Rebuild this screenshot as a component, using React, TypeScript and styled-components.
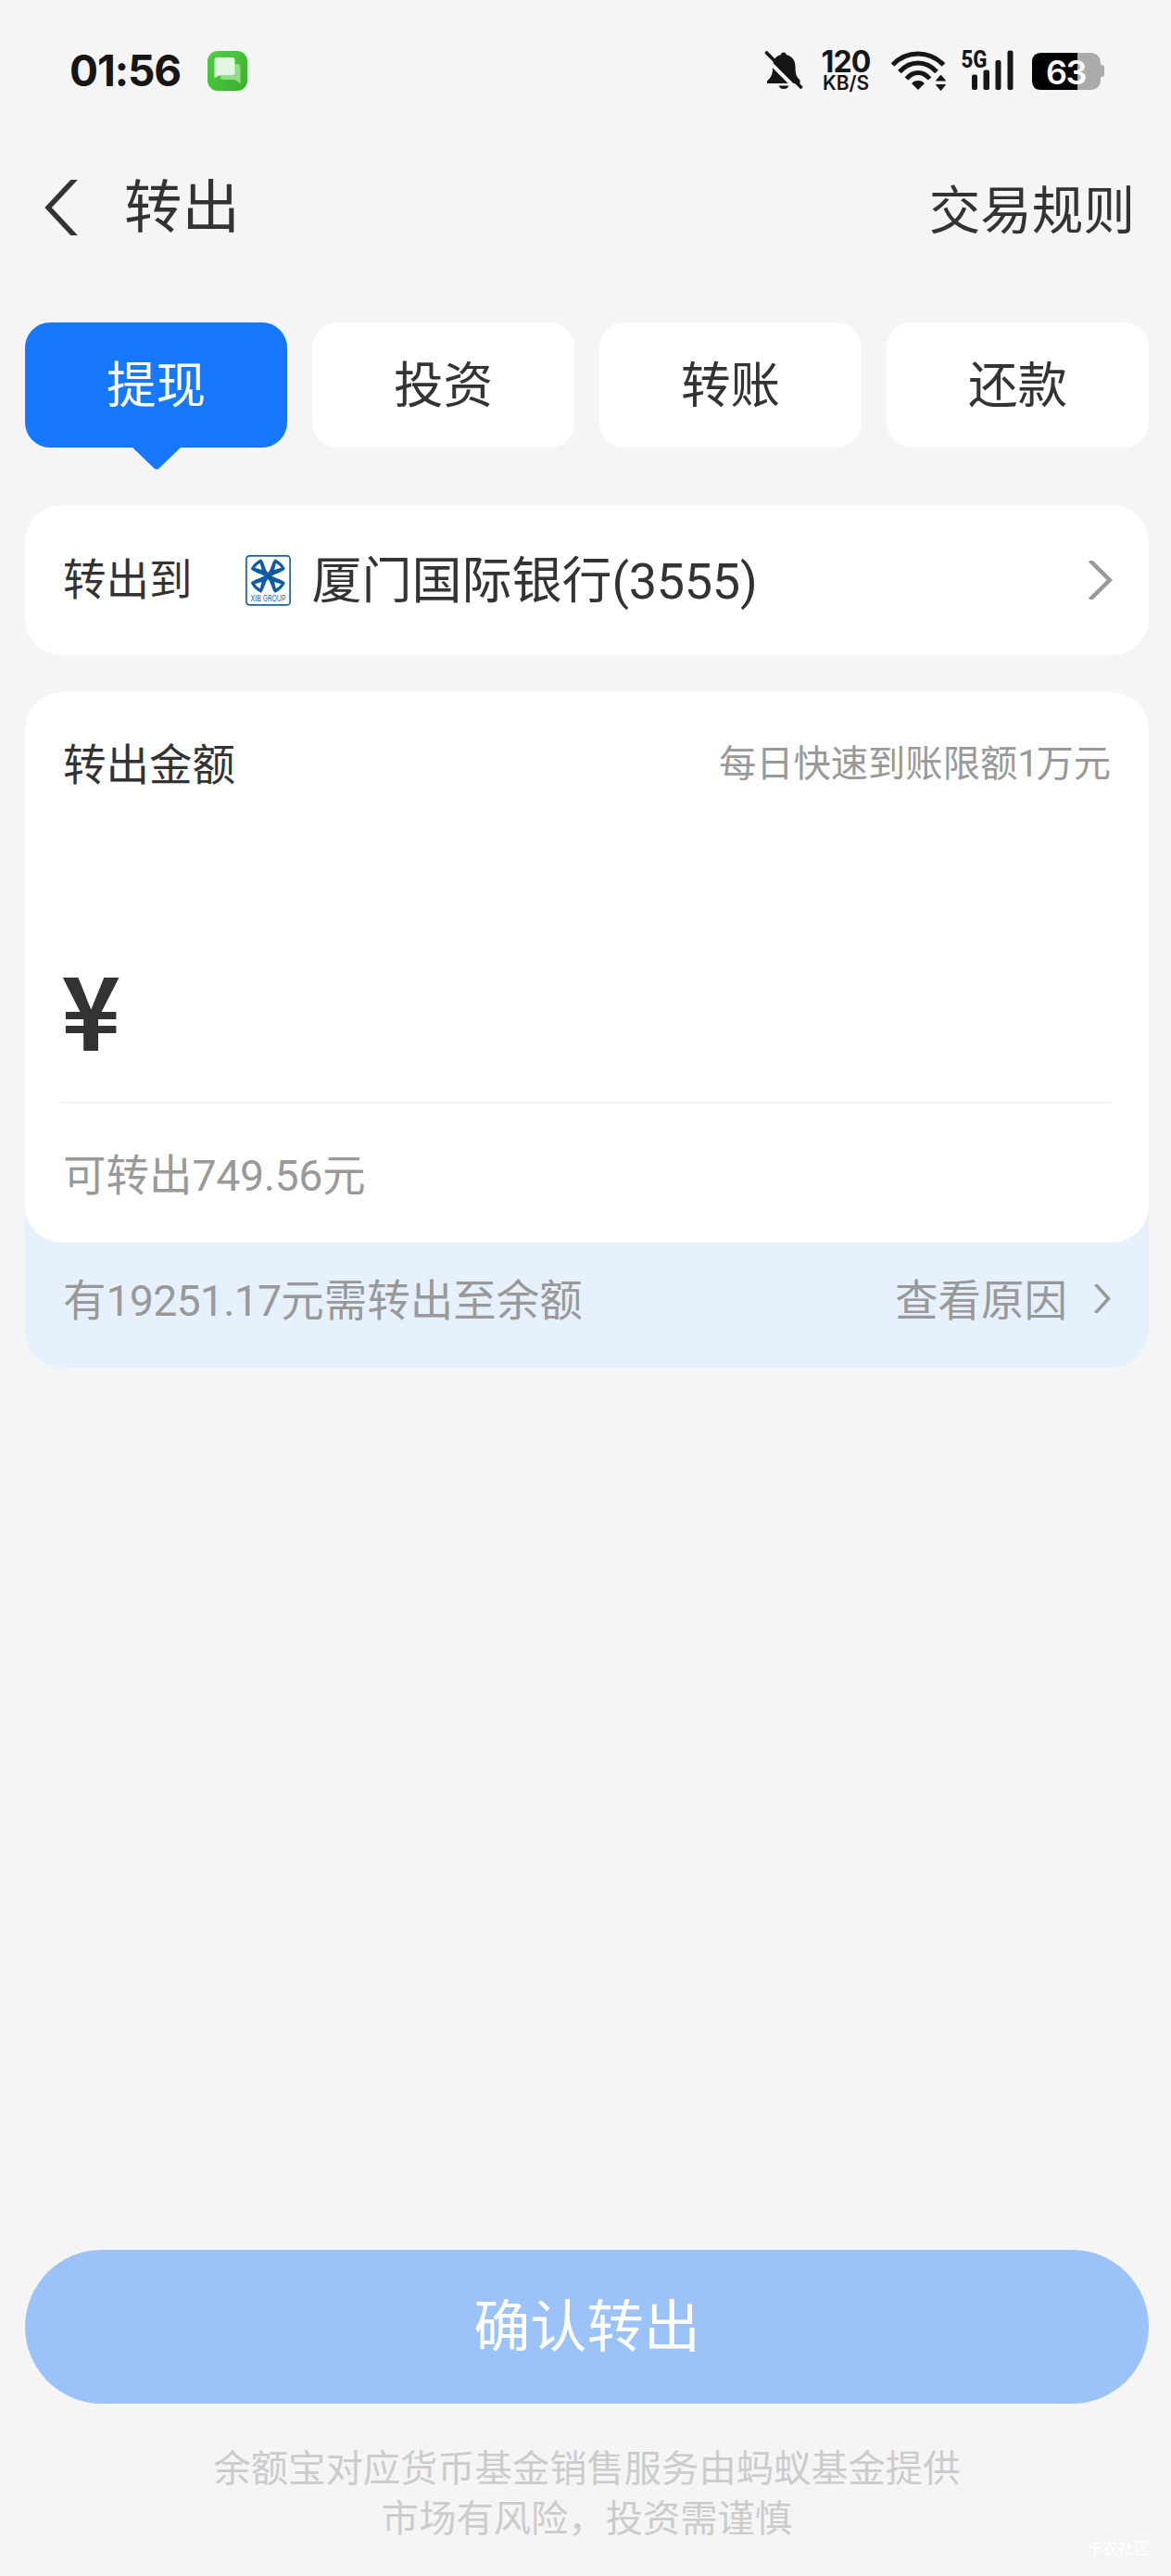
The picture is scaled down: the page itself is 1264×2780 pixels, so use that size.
import React from "react";
import styled, { createGlobalStyle } from "styled-components";

const GlobalStyle = createGlobalStyle`
  * { box-sizing: border-box; }
  body {
    margin: 0;
    background: #f5f5f5;
    font-family: Roboto, "Noto Sans CJK SC", sans-serif;
    color: #333;
  }
`;

const Page = styled.main`
  width: 1264px;
  height: 2780px;
  display: flex;
  flex-direction: column;
  background: #f5f5f5;
  overflow: hidden;
`;

const StatusBar = styled.header`
  height: 152px;
  padding: 0 72px 0 75px;
  display: flex;
  align-items: center;
  font-family: Inter, sans-serif;
  color: #161616;
`;

const Clock = styled.span`
  font-size: 46px;
  font-weight: 700;
  letter-spacing: -1.1px;
  line-height: 56px;
  width: 149px;
  white-space: nowrap;
`;

const StatusIcons = styled.div`
  margin-left: auto;
  display: flex;
  align-items: center;
`;

const Speed = styled.div`
  width: 54px;
  margin: 0 22px 0 19px;
  padding-top: 2px;
  display: flex;
  flex-direction: column;
  align-items: center;
  font-weight: 700;
`;

const SpeedValue = styled.span`
  font-size: 32px;
  line-height: 24px;
  letter-spacing: -0.8px;
`;

const SpeedUnit = styled.span`
  margin-top: 2px;
  font-size: 21px;
  line-height: 18px;
  font-weight: 600;
`;

const SignalIcon = styled.svg`
  margin: 0 20px 0 16px;
  overflow: visible;
`;

const BatteryIcon = styled.svg`
  margin-top: 2px;
  overflow: visible;
`;

const NavBar = styled.nav`
  height: 142px;
  padding: 2px 39px 0 48px;
  display: flex;
  align-items: center;
`;

const Title = styled.h1`
  margin: 0 auto 0 50px;
  padding-top: 1px;
  font-size: 62.4px;
  line-height: 80px;
  font-weight: 400;
`;

const RuleLink = styled.a`
  padding-top: 7px;
  font-size: 55.6px;
  line-height: 70px;
`;

const Tabs = styled.div`
  margin: 54px 24px 0 27px;
  display: grid;
  grid-template-columns: repeat(4, 283px);
  gap: 27px;
`;

const Tab = styled.button<{ $active?: boolean }>`
  position: relative;
  height: 135px;
  padding: 3px 0 0;
  border: 0;
  border-radius: 27px;
  font: inherit;
  font-size: 53.6px;
  line-height: 70px;
  background: ${(p) => (p.$active ? "#1677ff" : "#fff")};
  color: ${(p) => (p.$active ? "#fff" : "#333")};
`;

const TabPointer = styled.svg`
  position: absolute;
  left: 115px;
  top: 134px;
`;

const AccountCard = styled.section`
  height: 162px;
  margin: 62px 24px 0 27px;
  padding: 0 39px 0 41px;
  border-radius: 40px;
  background: #fff;
  display: flex;
  align-items: center;
`;

const Label = styled.span`
  font-size: 46.5px;
  line-height: 60px;
`;

const BankLogo = styled.svg`
  margin: 0 23px 0 57px;
`;

const BankName = styled.span`
  margin-right: auto;
  padding-top: 3px;
  font-size: 54px;
  line-height: 70px;
`;

const Digits = styled.span<{ $tracking: number }>`
  letter-spacing: ${(p) => p.$tracking}px;
`;

const AmountPanel = styled.section`
  margin: 40px 24px 0 27px;
  border-radius: 40px;
  background: #e7f1fe;
`;

const AmountCard = styled.div`
  height: 594px;
  padding: 49px 41px 0 41px;
  border-radius: 40px;
  background: #fff;
  display: flex;
  flex-direction: column;
`;

const AmountHeader = styled.div`
  display: flex;
  align-items: center;
  justify-content: space-between;
`;

const Limit = styled.span`
  padding-bottom: 2px;
  font-size: 40.3px;
  line-height: 56px;
  color: #999;
`;

const Currency = styled.div`
  margin: 170px 0 0 -2px;
  height: 121px;
  font-family: "Noto Sans CJK SC", sans-serif;
  font-size: 109px;
  line-height: 121px;
  font-weight: 700;
`;

const Divider = styled.hr`
  width: 1135px;
  height: 2px;
  margin: 42px 0 0 -3px;
  border: 0;
  background: #f3f3f3;
`;

const Hint = styled.span`
  font-size: 46.5px;
  line-height: 60px;
  color: #999;
`;

const Available = styled(Hint)`
  margin-top: 48px;
`;

const BalanceNote = styled.div`
  height: 135px;
  padding: 0 41px 9px;
  display: flex;
  align-items: center;
`;

const ReasonLink = styled(Hint)`
  margin: 0 28px 0 auto;
`;

const ReasonArrow = styled.span`
  display: flex;
  padding-bottom: 5px;
`;

const ConfirmButton = styled.button`
  height: 166px;
  margin: auto 24px 0 27px;
  padding: 2px 0 0;
  border: 0;
  border-radius: 83px;
  background: #9bc2f9;
  color: #fff;
  font: inherit;
  font-size: 61.2px;
  line-height: 80px;
`;

const Disclaimer = styled.footer`
  height: 186px;
  padding: 44px 0 0 3px;
  font-size: 40.3px;
  line-height: 54px;
  text-align: center;
  color: #ccc;
  position: relative;
`;

const Watermark = styled.span`
  position: absolute;
  right: 23px;
  bottom: 18px;
  font-size: 17px;
  line-height: 24px;
  color: #fff;
`;

const MessageIcon = () => (
  <svg width="43" height="43" viewBox="0 0 43 43">
    <defs>
      <linearGradient id="msg" x1="0" y1="0" x2="1" y2="1">
        <stop offset="0" stopColor="#4fd043" />
        <stop offset="1" stopColor="#3bae2c" />
      </linearGradient>
    </defs>
    <rect width="43" height="43" rx="11" fill="url(#msg)" />
    <path d="M17 14h15.500q3 0 3 3v18.800q-3.500-4.800-8-4.800H17q-3 0-3-3V17q0-3 3-3z" fill="#93dc8c" />
    <path d="M10 7h16.500q3 0 3 3v13q0 3-3 3H15q-3.500 0-7.500 3.500V9.500Q7.500 7 10 7z" fill="#e2f8e0" />
  </svg>
);

const MutedBell = () => (
  <svg width="42" height="42" viewBox="0 0 42 42">
    <path
      d="M18 4q0-2.500 2.800-2.500T23.600 4C30 5.500 33.500 10 33.500 17c0 8 1 10.500 5 14.500V35H3v-2.500C7.500 28 9 26 9 18 9 10 12 5.500 18 4z"
      fill="#161616"
    />
    <path d="M15.500 37.500h11q-1.500 3.500-5.500 3.500t-5.500-3.500z" fill="#161616" />
    <path d="M-1 5.500l37 37" stroke="#f5f5f5" strokeWidth="4" />
    <path d="M2.500 2l37 37" stroke="#161616" strokeWidth="3.600" strokeLinecap="round" />
  </svg>
);

const Wifi = () => (
  <svg width="60" height="43" viewBox="0 0 60 43">
    <g fill="none" stroke="#161616" strokeWidth="5" strokeLinecap="butt">
      <path d="M1.500 15Q13 3 29 3t27.500 12" />
      <path d="M9 22.500Q17.500 13 29 13t20 9.500" />
      <path d="M16.500 30Q22 23.500 29 23.500T41.500 30" />
    </g>
    <path d="M29 42l-6.800-6.800Q24 32 29 32t6.800 3.200z" fill="#161616" />
    <path d="M48.500 32l5-6 5 6zM48.500 36.500h10l-5 6z" fill="#161616" stroke="#161616" strokeLinejoin="round" />
  </svg>
);

const Signal = () => (
  <SignalIcon width="56" height="44" viewBox="0 0 56 44">
    <text x="-0.500" y="18.500" fontFamily="Roboto" fontWeight="800" fontSize="25.500" textLength="28" lengthAdjust="spacingAndGlyphs" fill="#161616">
      5G
    </text>
    <rect x="11" y="26.500" width="6" height="16.500" rx="2" fill="#161616" />
    <rect x="23.500" y="21.500" width="6.500" height="21.500" rx="2" fill="#161616" />
    <rect x="36.500" y="11" width="6" height="32" rx="2" fill="#161616" />
    <rect x="49.500" y="0.500" width="6" height="42.500" rx="2" fill="#161616" />
  </SignalIcon>
);

const Battery = () => (
  <BatteryIcon width="78" height="40" viewBox="0 0 78 40">
    <rect x="0" y="0" width="74" height="40" rx="10" fill="#ababab" />
    <path d="M73 13h2q3 0 3 3v7q0 3-3 3h-2z" fill="#ababab" />
    <path d="M10 0h39v40H10q-10 0-10-10V10Q0 0 10 0z" fill="#000" />
    <text x="36.500" y="34" textAnchor="middle" fontFamily="Inter" fontWeight="600" fontSize="36" letterSpacing="-1.500" fill="#fff">
      63
    </text>
  </BatteryIcon>
);

const XibLogo = () => (
  <BankLogo width="49" height="55" viewBox="0 0 49 55">
    <rect x="0.900" y="0.900" width="47.200" height="53" rx="3.500" fill="#fff" stroke="#1765a5" strokeWidth="1.700" />
    {[1, -1].map((sx) =>
      [1, -1].map((sy) => (
        <g key={`${sx}${sy}`} transform={`translate(24.300 22.500) scale(${sx} ${sy})`}>
          <path d="M-1 -1L2.500 -1C6 2 15 3.500 18.500 7.500Q15.500 14.500 7.500 18.300C3.500 14 3.500 6 -1 2.500z" fill="#0f5ca3" />
          <path d="M6.800 6.600L14.200 8.800Q12 12 8.600 13.800z" fill="#fff" />
        </g>
      ))
    )}
    <text x="5.500" y="50" fontFamily="Inter" fontSize="8.500" textLength="38" lengthAdjust="spacingAndGlyphs" fill="#2b5f8c">
      XIB GROUP
    </text>
  </BankLogo>
);

const Chevron = ({ width, height, stroke }: { width: number; height: number; stroke: number }) => (
  <svg width={width} height={height} viewBox={`0 0 ${width} ${height}`}>
    <path
      d={`M2.500 0L${width - stroke * 0.7} ${height / 2}L2.500 ${height}`}
      fill="none"
      stroke="#999"
      strokeWidth={stroke}
    />
  </svg>
);

const TABS = ["提现", "投资", "转账", "还款"];

export default function App() {
  return (
    <Page>
      <GlobalStyle />
      <StatusBar>
        <Clock>01:56</Clock>
        <MessageIcon />
        <StatusIcons>
          <MutedBell />
          <Speed>
            <SpeedValue>120</SpeedValue>
            <SpeedUnit>KB/S</SpeedUnit>
          </Speed>
          <Wifi />
          <Signal />
          <Battery />
        </StatusIcons>
      </StatusBar>

      <NavBar>
        <svg width="36" height="60" viewBox="0 0 36 60">
          <path d="M34 -2L4 30L34 62" fill="none" stroke="#333" strokeWidth="5.500" />
        </svg>
        <Title>转出</Title>
        <RuleLink>交易规则</RuleLink>
      </NavBar>

      <Tabs>
        {TABS.map((name, i) => (
          <Tab key={name} $active={i === 0}>
            {name}
            {i === 0 && (
              <TabPointer width="54" height="26" viewBox="0 0 54 26">
                <path d="M0 0h54L30 23q-3 3-6 0z" fill="#1677ff" />
              </TabPointer>
            )}
          </Tab>
        ))}
      </Tabs>

      <AccountCard>
        <Label>转出到</Label>
        <XibLogo />
        <BankName>
          厦门国际银行<Digits $tracking={-0.3}>(3555)</Digits>
        </BankName>
        <Chevron width={27} height={42} stroke={4.5} />
      </AccountCard>

      <AmountPanel>
        <AmountCard>
          <AmountHeader>
            <Label>转出金额</Label>
            <Limit>
              每日快速到账限额<Digits $tracking={-2.5}>1</Digits>万元
            </Limit>
          </AmountHeader>
          <Currency>¥</Currency>
          <Divider />
          <Available>
            可转出<Digits $tracking={-0.4}>749.56</Digits>元
          </Available>
        </AmountCard>
        <BalanceNote>
          <Hint>
            有<Digits $tracking={-0.8}>19251.17</Digits>元需转出至余额
          </Hint>
          <ReasonLink>查看原因</ReasonLink>
          <ReasonArrow>
            <Chevron width={19} height={31} stroke={3.5} />
          </ReasonArrow>
        </BalanceNote>
      </AmountPanel>

      <ConfirmButton>确认转出</ConfirmButton>
      <Disclaimer>
        余额宝对应货币基金销售服务由蚂蚁基金提供
        <br />
        市场有风险，投资需谨慎
        <Watermark>卡农社区</Watermark>
      </Disclaimer>
    </Page>
  );
}
